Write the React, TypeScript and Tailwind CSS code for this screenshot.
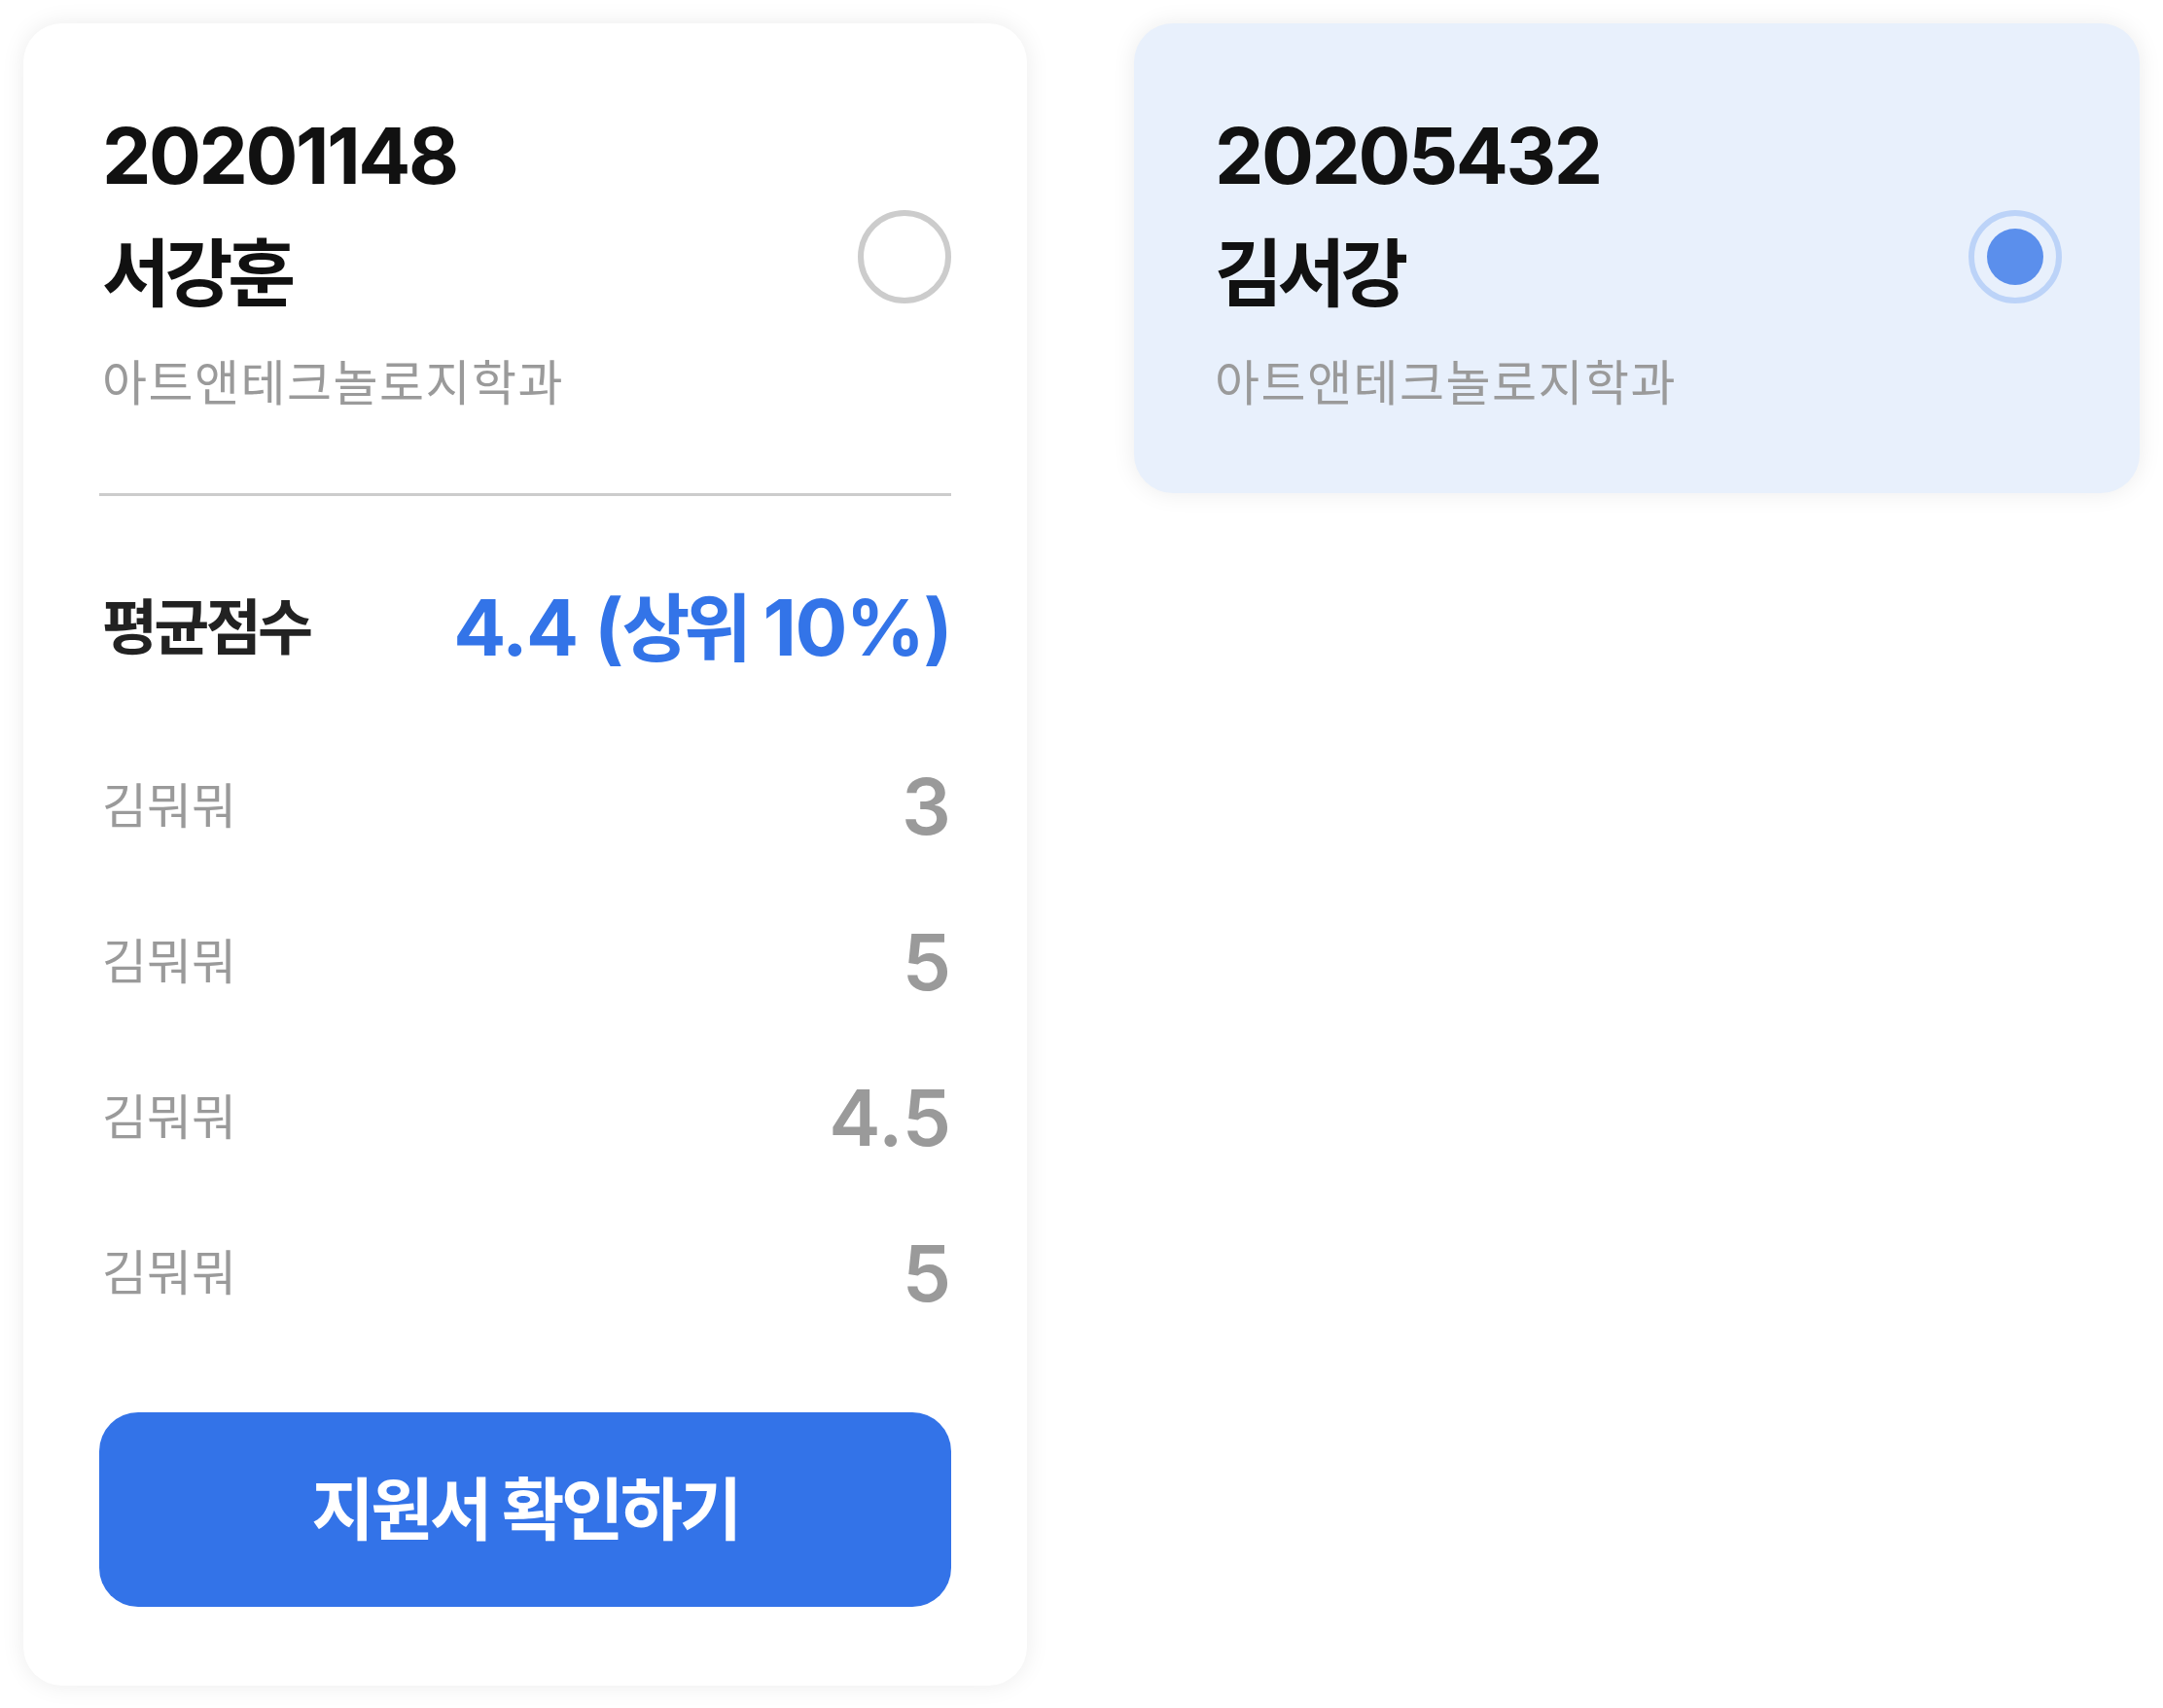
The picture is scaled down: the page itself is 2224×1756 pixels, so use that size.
const FONT = 'Inter, "Noto Sans CJK KR", sans-serif';

type Student = {
  id: string;
  name: string;
  dept: string;
  selected: boolean;
};

function Radio({ selected }: { selected: boolean }) {
  if (selected) {
    return (
      <div className="mb-[8px] flex h-[96px] w-[96px] shrink-0 items-center justify-center rounded-full border-[6px] border-[#bcd3f8]">
        <div className="h-[58px] w-[58px] rounded-full bg-[#5b8fec]" />
      </div>
    );
  }
  return <div className="mb-[8px] h-[96px] w-[96px] shrink-0 rounded-full border-[6px] border-[#cccccc]" />;
}

function Header({ student }: { student: Student }) {
  return (
    <div className="flex items-center justify-between pt-[88px] pb-[83px]">
      <div className="flex flex-col pl-[3px]">
        <div className="text-[80px] leading-[96px] font-bold tracking-[-0.03em] text-[#111111]">{student.id}</div>
        <div className="mt-[25px] text-[76px] leading-[96px] font-bold tracking-[-0.07em] text-[#111111]">
          {student.name}
        </div>
        <div className="mt-[35px] text-[50px] leading-[60px] tracking-[1.5px] text-[#9a9a9a]">
          {student.dept}
        </div>
      </div>
      <Radio selected={student.selected} />
    </div>
  );
}

const scores = [
  { label: "김뭐뭐", value: "3" },
  { label: "김뭐뭐", value: "5" },
  { label: "김뭐뭐", value: "4.5" },
  { label: "김뭐뭐", value: "5" },
];

export default function App() {
  const first: Student = { id: "20201148", name: "서강훈", dept: "아트앤테크놀로지학과", selected: false };
  const second: Student = { id: "20205432", name: "김서강", dept: "아트앤테크놀로지학과", selected: true };

  return (
    <div className="min-h-screen bg-white p-[24px]" style={{ fontFamily: FONT }}>
      <div className="flex items-start gap-[110px]">
        {/* Expanded card */}
        <div className="w-[1032px] rounded-[40px] bg-white px-[78px] pb-[81px] shadow-[0_0_24px_rgba(0,0,0,0.08)]">
          <Header student={first} />
          <div className="h-[3px] bg-[#cccccc]" />

          <div className="mt-[75px] flex h-[120px] items-center justify-between pl-[3px]">
            <span className="text-[62px] font-bold tracking-[-0.06em] text-[#222222]">평균점수</span>
            <span className="text-[80px] font-bold tracking-[-0.02em] text-[#3374e8]">
              4.4 (<span className="text-[76px] tracking-[-0.08em]">상위</span> 10%)
            </span>
          </div>

          <div className="mt-[44px] flex flex-col">
            {scores.map((s, i) => (
              <div key={i} className="flex h-[160px] items-center justify-between pl-[3px]">
                <span className="text-[50px] tracking-[0px] text-[#9a9a9a]">{s.label}</span>
                <span className="text-[80px] font-semibold text-[#9a9a9a]">{s.value}</span>
              </div>
            ))}
          </div>

          <button className="mt-[63px] flex h-[200px] w-full items-center justify-center rounded-[40px] bg-[#3373e8]">
            <span className="text-[70px] font-bold tracking-[-0.05em] text-white">지원서 확인하기</span>
          </button>
        </div>

        {/* Selected card */}
        <div className="w-[1034px] rounded-[40px] bg-[#e8f0fc] px-[80px] shadow-[0_0_24px_rgba(0,0,0,0.08)]">
          <Header student={second} />
        </div>
      </div>
    </div>
  );
}
